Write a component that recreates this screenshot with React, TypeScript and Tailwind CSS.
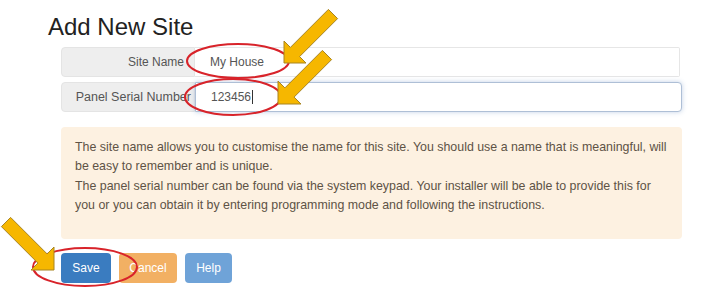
import React from "react";

const arrows = [
  "284,63 284,41 290.4,47.4 328.4,9.4 337.6,18.6 299.6,56.6 306,63",
  "278,104 278,81 284.9,87.9 322.4,50.4 331.6,59.6 294.1,97.1 301,104",
  "54,270 54,247 47.1,253.9 10.6,217.4 1.4,226.6 37.9,263.1 31,270",
];

export default function App() {
  return (
    <div className="relative w-[720px] h-[307px] overflow-hidden bg-white font-['Liberation_Sans',Arial,sans-serif]">
      <div className="pl-[48px] pt-[13px]">
        <h1 className="text-[24px] leading-[28px] text-[#222] font-normal">Add New Site</h1>
      </div>
      <div className="ml-[61px] w-[621px] mt-[6px]">
        <div className="flex h-[30px]">
          <div className="w-[134px] shrink-0 bg-[#eeeeee] border border-[#e4e4e4] rounded-l-[4px] flex items-center justify-end pr-[10px] text-[12px] text-[#555]">
            Site Name
          </div>
          <div className="flex-1 mr-[2px] border border-[#e6e6e6] border-l-0 rounded-r-[2px] flex items-center pl-[15px] text-[12px] text-[#555] bg-white">
            My House
          </div>
        </div>
        <div className="flex h-[30px] mt-[5px]">
          <div className="w-[134px] shrink-0 bg-[#eeeeee] border border-[#e4e4e4] rounded-l-[4px] flex items-center justify-end pr-[3px] text-[12.5px] text-[#555] whitespace-nowrap overflow-hidden">
            Panel Serial Number
          </div>
          <div className="flex-1 border border-[#aebfd6] rounded-r-[4px] flex items-center pl-[15px] text-[12px] text-[#555] bg-white shadow-[0_0_5px_rgba(120,150,200,0.45)]">
            123456<span className="inline-block w-px h-[14px] bg-[#333] ml-px" />
          </div>
        </div>
        <div className="mt-[15px] h-[112px] bg-[#fdf1e1] rounded-[4px] pt-[11px] pl-[14px] pr-[4px] text-[12.4px] leading-[19.3px] text-[#5e5346] whitespace-nowrap">
          <p>
            The site name allows you to customise the name for this site. You should use a name that is meaningful, will
            <br />
            be easy to remember and is unique.
          </p>
          <p>
            The panel serial number can be found via the system keypad. Your installer will be able to provide this for
            <br />
            you or you can obtain it by entering programming mode and following the instructions.
          </p>
        </div>
        <div className="flex gap-[8px] mt-[14px]">
          <button className="h-[30px] w-[50px] rounded-[4px] bg-[#3a7cc0] text-white text-[12px]">Save</button>
          <button className="h-[30px] w-[58px] rounded-[4px] bg-[#f2b063] text-white text-[12px]">Cancel</button>
          <button className="h-[30px] w-[47px] rounded-[4px] bg-[#6fa3d8] text-white text-[12px]">Help</button>
        </div>
      </div>
      <svg className="absolute inset-0 pointer-events-none" width="720" height="307" viewBox="0 0 720 307">
        <ellipse cx="238" cy="61" rx="51" ry="17" fill="none" stroke="#d8232a" strokeWidth="2" />
        <ellipse cx="233" cy="97" rx="48" ry="18" fill="none" stroke="#d8232a" strokeWidth="2" />
        <ellipse cx="85" cy="267" rx="52" ry="19" fill="none" stroke="#d8232a" strokeWidth="2" />
        {arrows.map((p, i) => (
          <polygon key={i} points={p} fill="#f6b700" stroke="#a88420" strokeWidth="1" strokeLinejoin="round" />
        ))}
      </svg>
    </div>
  );
}
